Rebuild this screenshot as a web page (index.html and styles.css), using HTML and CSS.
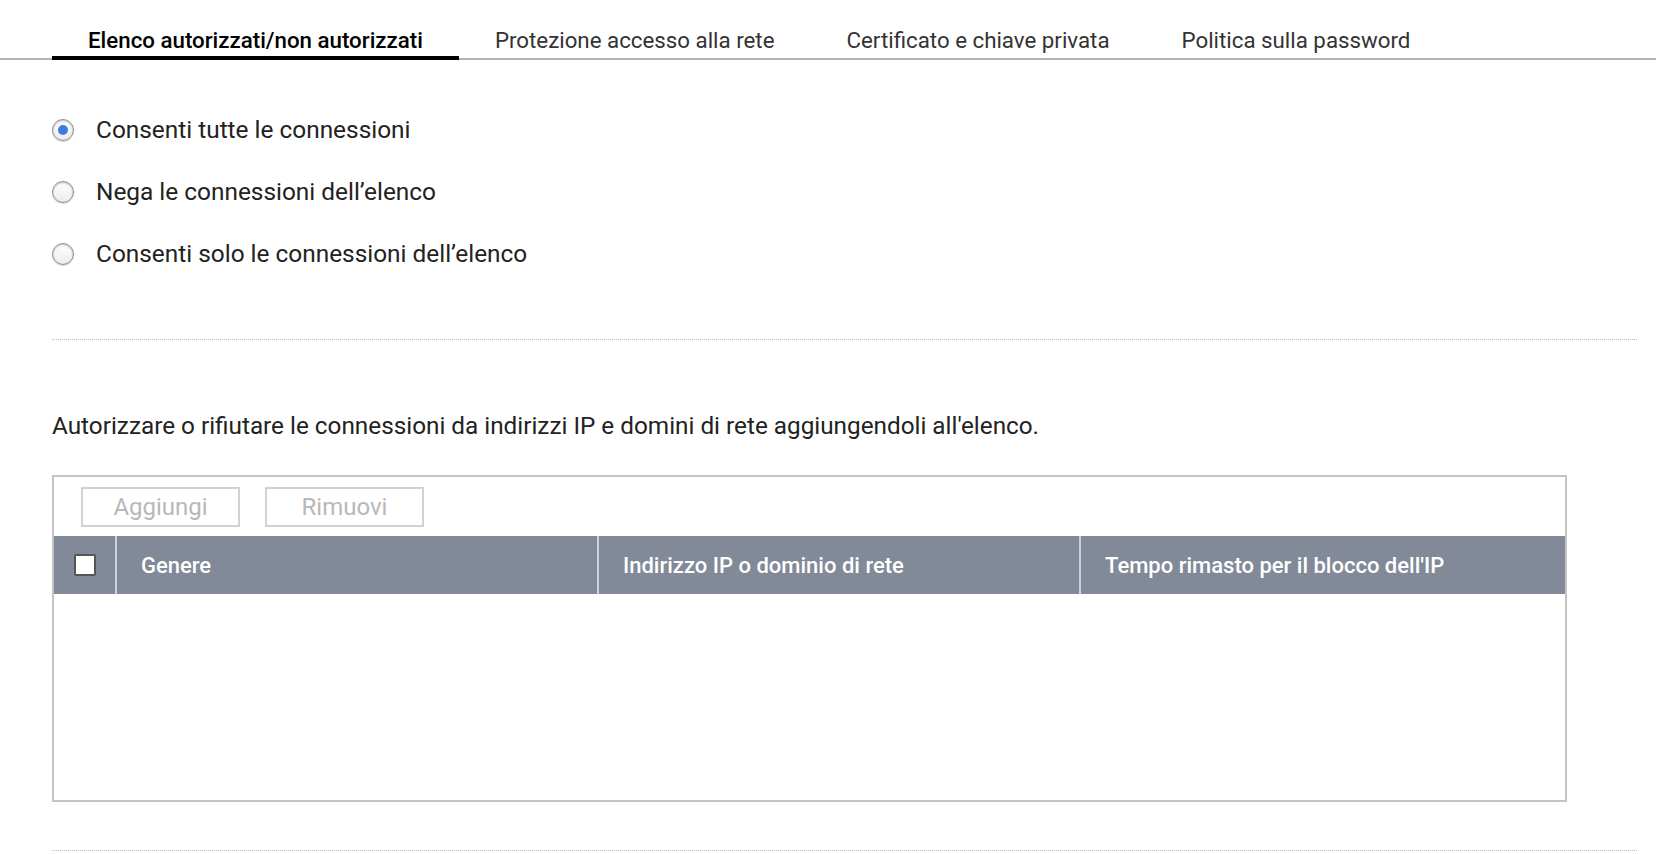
FILE: index.html
```html
<!DOCTYPE html>
<html>

<head>
    <link rel="stylesheet" href="styles.css">
</head>
<body>
    <div class="tabs">
        <div class="tab active">Elenco autorizzati/non autorizzati</div>
        <div class="tab">Protezione accesso alla rete</div>
        <div class="tab">Certificato e chiave privata</div>
        <div class="tab">Politica sulla password</div>
    </div>

    <div class="content">
        <div class="options">
            <label class="option"><span class="radio checked"></span>Consenti tutte le connessioni</label>
            <label class="option"><span class="radio"></span>Nega le connessioni dell&rsquo;elenco</label>
            <label class="option"><span class="radio"></span>Consenti solo le connessioni dell&rsquo;elenco</label>
        </div>

        <div class="sep"></div>

        <p class="desc">Autorizzare o rifiutare le connessioni da indirizzi IP e domini di rete aggiungendoli all'elenco.</p>

        <div class="list-box">
            <div class="toolbar">
                <button class="btn" disabled>Aggiungi</button>
                <button class="btn" disabled>Rimuovi</button>
            </div>
            <div class="list-head">
                <div class="col-check"><span class="checkbox"></span></div>
                <div class="col">Genere</div>
                <div class="col">Indirizzo IP o dominio di rete</div>
                <div class="col col-last">Tempo rimasto per il blocco dell'IP</div>
            </div>
            <div class="list-body"></div>
        </div>

        <div class="sep sep-bottom"></div>
    </div>
</body>

</html>
```

FILE: styles.css
```css
* {
    margin: 0;
    box-sizing: border-box;
}

body {
    font-family: Roboto, "Liberation Sans", sans-serif;
    color: #222;
    background-color: #fff;
}

.tabs {
    display: flex;
    padding-left: 52px;
    height: 60px;
    border-bottom: 2px solid #b3b3b3;
}

.tab {
    padding: 27px 36px 3px;
    height: 60px;
    font-size: 22.3px;
    line-height: 26px;
    color: #333;
    border-bottom: 4px solid transparent;
    cursor: pointer;
}

.tab.active {
    color: #000;
    font-weight: 500;
    border-bottom-color: #000;
}

.content {
    padding: 0 19px 0 52px;
}

.options {
    display: flex;
    flex-direction: column;
    gap: 32px;
    padding: 54px 0 71px;
}

.option {
    display: flex;
    align-items: center;
    height: 30px;
    padding-top: 1px;
    font-size: 24.4px;
    color: #222;
}

.radio {
    position: relative;
    width: 22px;
    height: 22px;
    margin-right: 22px;
    border-radius: 50%;
    border: 1px solid #8e8e8e;
    background: linear-gradient(#ffffff, #ececec);
    box-shadow: inset 0 1px 2px rgba(0, 0, 0, 0.25), 0 1px 1px rgba(0, 0, 0, 0.15);
}

.radio.checked::after {
    content: "";
    position: absolute;
    left: 5px;
    top: 5px;
    width: 10px;
    height: 10px;
    border-radius: 50%;
    background-color: #3a7de2;
}

.sep {
    border-top: 1px dotted #bbb;
}

.desc {
    margin-top: 71px;
    font-size: 24.3px;
    line-height: 30px;
    color: #222;
}

.list-box {
    margin-top: 34px;
    width: 1515px;
    height: 327px;
    border: 2px solid #c4c4c4;
    display: flex;
    flex-direction: column;
}

.toolbar {
    display: flex;
    gap: 25px;
    padding: 10px 27px 9px;
}

.btn {
    width: 159px;
    height: 40px;
    font-family: inherit;
    font-size: 24px;
    color: #b8b8b8;
    background-color: #fff;
    border: 2px solid #d2d2d2;
}

.list-head {
    display: flex;
    height: 58px;
    background-color: #828998;
    color: #fff;
    font-size: 22px;
    font-weight: 500;
}

.col-check {
    width: 61px;
    display: flex;
    align-items: center;
    justify-content: center;
}

.checkbox {
    width: 22px;
    height: 22px;
    background-color: #fff;
    border: 2px solid #555;
    border-radius: 2px;
}

.col {
    flex: 0 0 482px;
    display: flex;
    align-items: center;
    padding-left: 24px;
    border-left: 2px solid #cdd1d9;
}

.col-last {
    flex: 1;
}

.list-body {
    flex: 1;
}

.sep-bottom {
    margin-top: 48px;
}
```
